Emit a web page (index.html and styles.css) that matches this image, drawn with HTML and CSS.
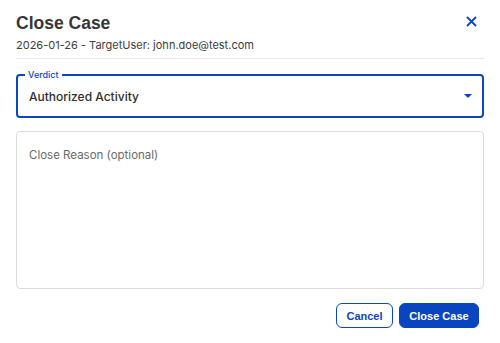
FILE: index.html
```html
<!DOCTYPE html>
<html>
<head>
<meta charset="utf-8">
<link rel="stylesheet" href="styles.css">
</head>
<body>
<div class="dialog">
  <div class="header">
    <div class="head-text">
      <div class="title">Close Case</div>
      <div class="subtitle">2026-01-26 - TargetUser: john.doe@test.com</div>
    </div>
    <button class="close-btn" aria-label="Close">
      <svg width="11" height="11" viewBox="0 0 11 11"><path d="M1 1L10 10M10 1L1 10" stroke="#0b47c4" stroke-width="1.8" fill="none"/></svg>
    </button>
  </div>
  <div class="divider"></div>
  <div class="select">
    <span class="select-label">Verdict</span>
    <span class="select-value">Authorized Activity</span>
    <svg class="arrow" width="8" height="4" viewBox="0 0 8 4"><path d="M0 0H8L4 4Z" fill="#0b47c4"/></svg>
  </div>
  <div class="textarea">
    <span class="placeholder">Close Reason (optional)</span>
  </div>
  <div class="actions">
    <button class="btn btn-outline">Cancel</button>
    <button class="btn btn-primary">Close Case</button>
  </div>
</div>
</body>
</html>
```
FILE: styles.css
```css
html, body {
  margin: 0;
  padding: 0;
  background: #fff;
}
body {
  font-family: Inter, "Liberation Sans", sans-serif;
  color: #333;
}
.dialog {
  padding: 11px 16px 15px 16px;
  display: flex;
  flex-direction: column;
}
.header {
  display: flex;
  justify-content: space-between;
  align-items: flex-start;
}
.title {
  font-family: "Liberation Sans", Arial, sans-serif;
  font-weight: 700;
  font-size: 17.5px;
  line-height: 24px;
  color: #363636;
}
.subtitle {
  font-size: 11px;
  line-height: 16px;
  margin-top: 2px;
  color: #3c3c3c;
}
.close-btn {
  border: 0;
  background: none;
  padding: 0;
  margin: 5px 7px 0 0;
  width: 11px;
  height: 11px;
  display: flex;
}
.divider {
  height: 1px;
  background: #e8e8e8;
  margin-top: 5px;
}
.select {
  margin-top: 15px;
  border: 2px solid #0b47c4;
  border-radius: 4px;
  padding: 0 10px 0 11px;
  height: 44px;
  box-sizing: border-box;
  display: flex;
  align-items: center;
  justify-content: space-between;
  position: relative;
}
.select-label {
  position: absolute;
  top: -7px;
  left: 7px;
  padding: 0 3px;
  background: #fff;
  font-size: 9px;
  line-height: 11px;
  color: #0b47c4;
  font-weight: 500;
}
.select-value {
  font-size: 12px;
  color: #2e2e2e;
  font-weight: 500;
}
.arrow {
  display: block;
}
.textarea {
  margin-top: 13px;
  height: 158px;
  border: 1px solid #dcdcdc;
  border-radius: 4px;
  box-sizing: border-box;
  padding: 14px 12px;
  line-height: 14px;
}
.placeholder {
  font-size: 11.5px;
  color: #6a6a6a;
}
.actions {
  display: flex;
  justify-content: flex-end;
  gap: 6px;
  margin-top: 14px;
  margin-right: 5px;
}
.btn {
  font-family: "Liberation Sans", Arial, sans-serif;
  font-weight: 700;
  font-size: 11px;
  height: 25px;
  border-radius: 6px;
  padding: 0;
  box-sizing: border-box;
}
.btn-outline {
  background: #fff;
  border: 1px solid #0b47c4;
  color: #0b47c4;
  width: 57px;
}
.btn-primary {
  background: #0a45c0;
  border: 1px solid #0a45c0;
  color: #fff;
  width: 80px;
}
```
